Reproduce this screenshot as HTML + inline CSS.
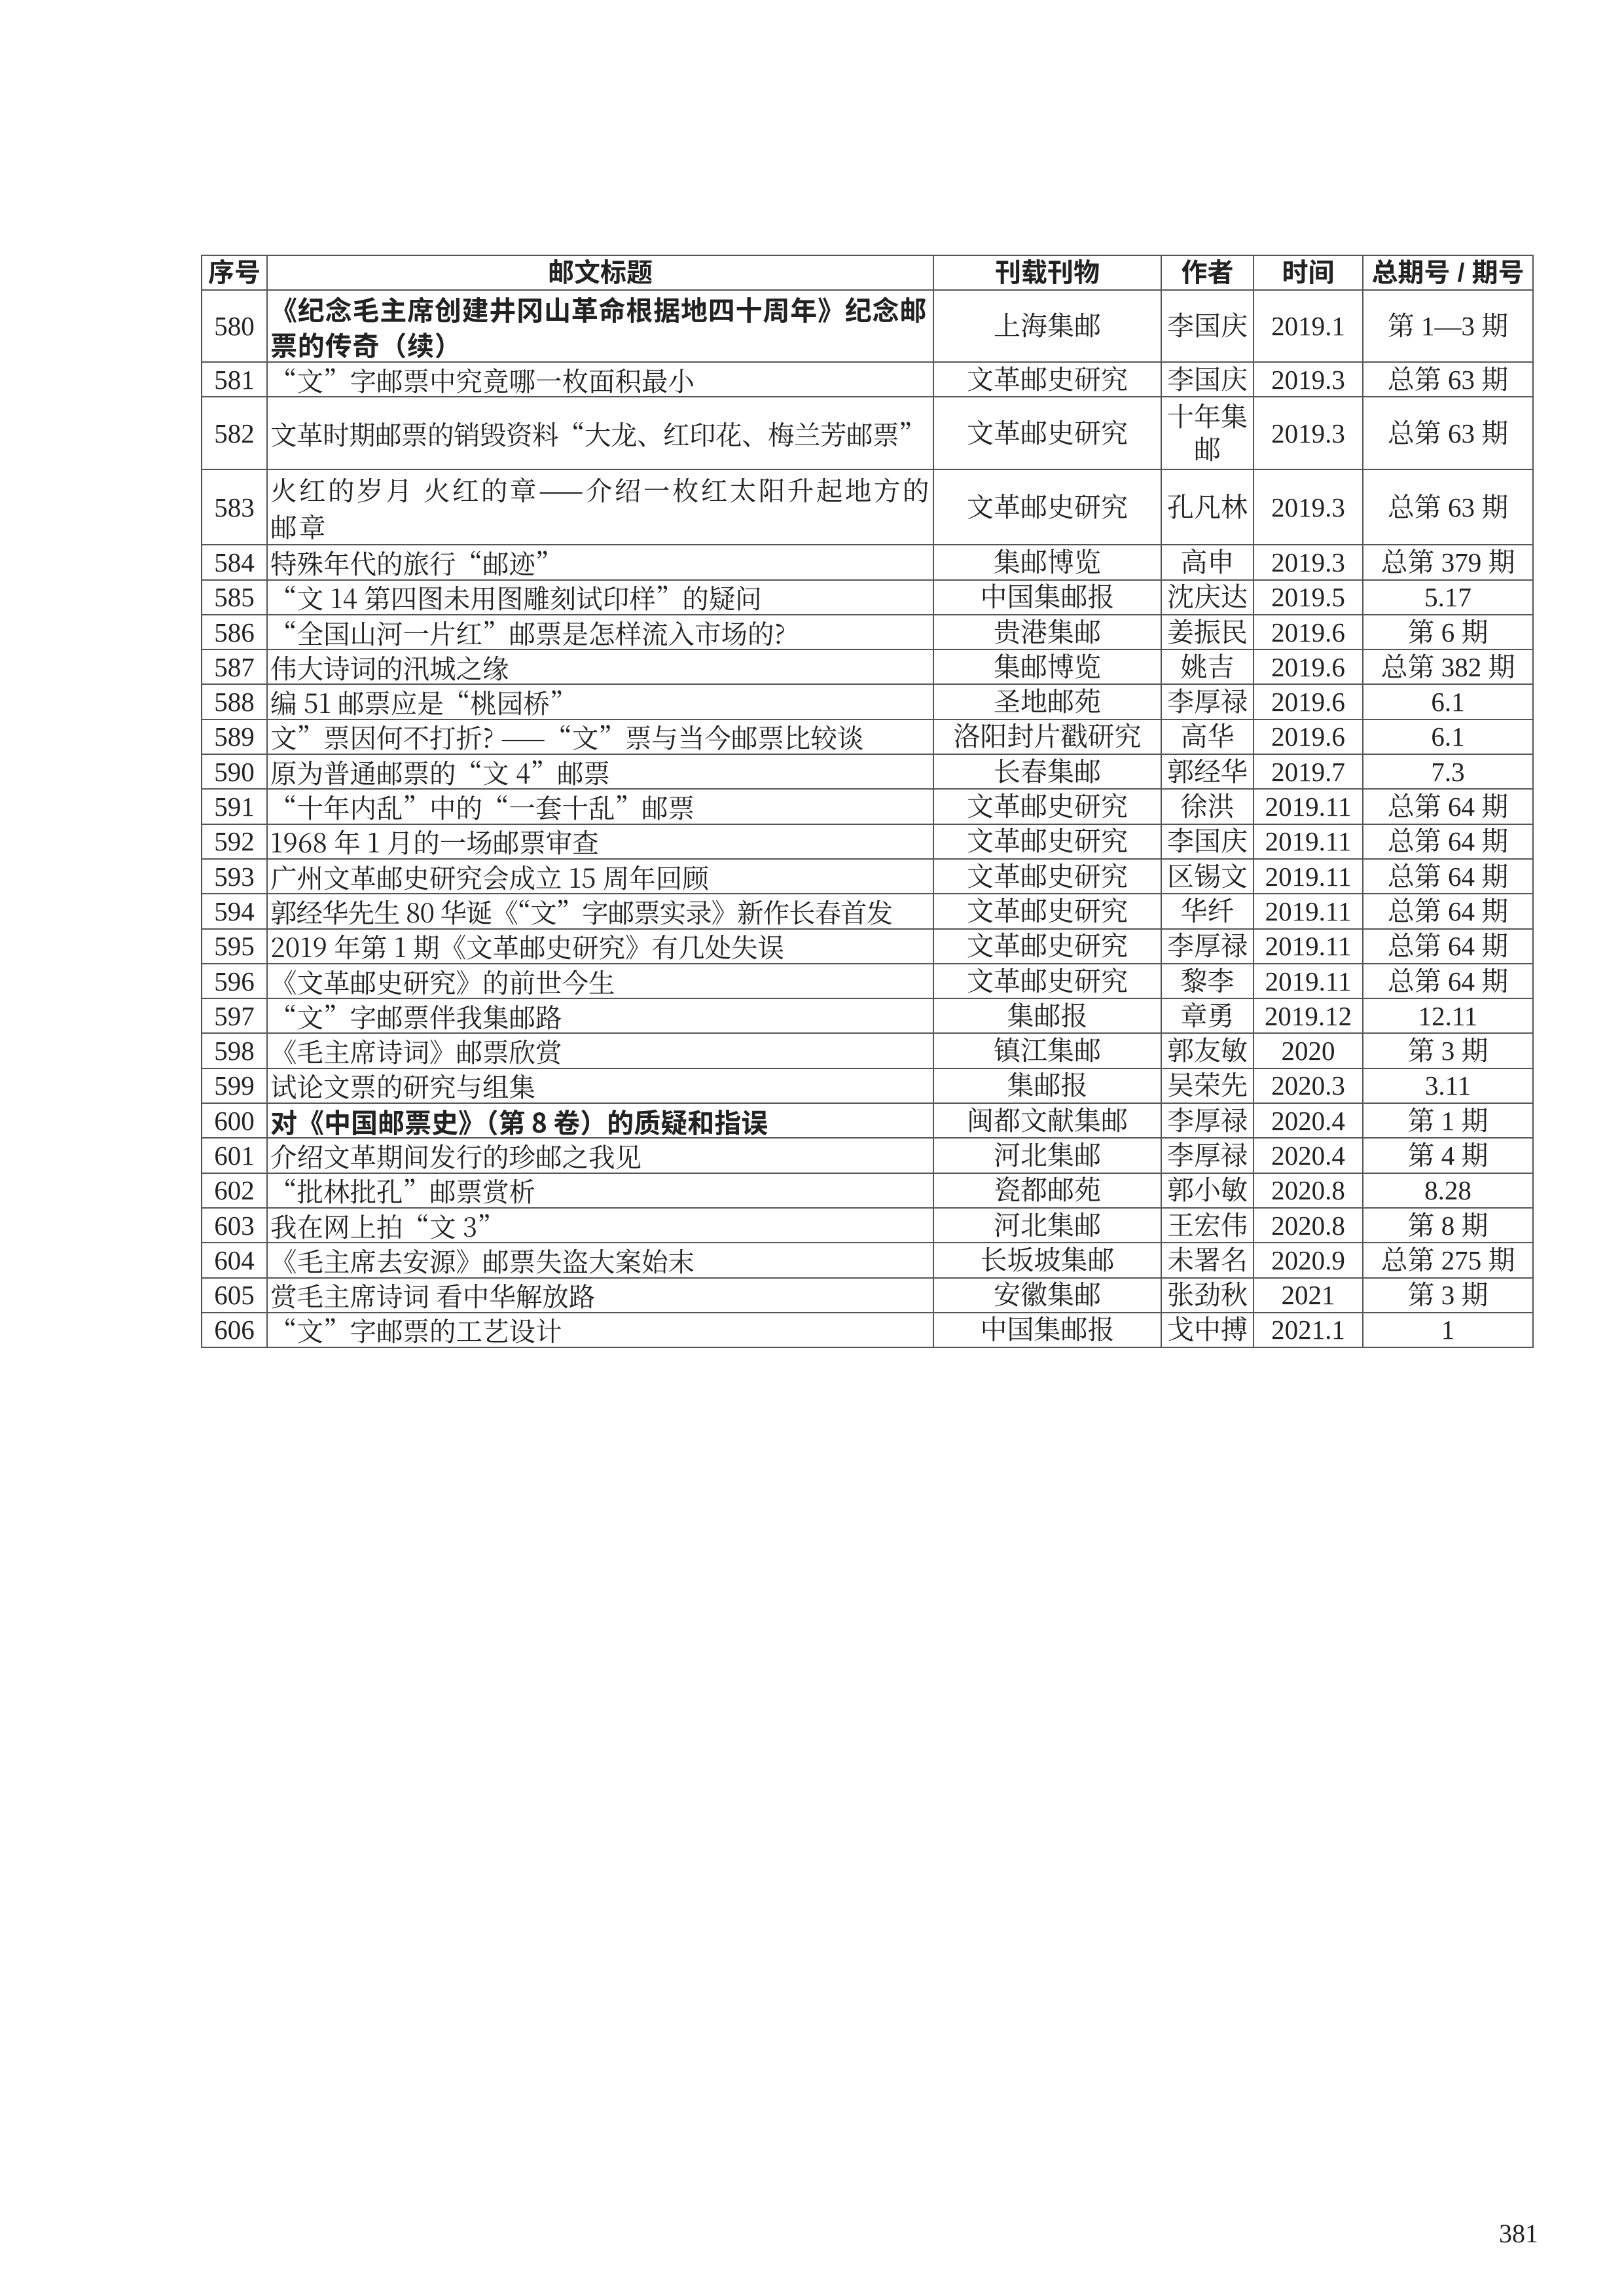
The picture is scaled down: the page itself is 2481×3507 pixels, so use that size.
<!DOCTYPE html>
<html><head><meta charset="utf-8"><style>
html,body{margin:0;padding:0;background:#fff;}
body{width:2481px;height:3507px;position:relative;overflow:hidden;}
table{position:absolute;left:307px;top:389px;border-collapse:collapse;table-layout:fixed;width:2034px;
font-family:"Liberation Serif","Noto Serif CJK SC",serif;font-size:41px;color:#222;}
td,th{border:2.5px solid #555;padding:0;line-height:48px;white-space:nowrap;overflow:hidden;vertical-align:middle;}
th{font-family:"Liberation Sans","Noto Sans CJK SC",sans-serif;font-weight:bold;font-size:40px;height:51px;}
td{text-align:center;height:51.3px;}
td.t{text-align:left;padding-left:4px;font-family:"Noto Serif CJK SC","Liberation Serif",serif;font-size:40.5px;}
td.n{text-align:center;}
td.b{font-family:"Noto Sans CJK SC","Liberation Sans",sans-serif;font-weight:bold;font-size:41px;}
.pg{position:absolute;left:2290px;top:3388px;font-family:"Liberation Serif",serif;font-size:40px;color:#222;}
</style></head><body>
<table>
<colgroup><col style="width:100px"><col style="width:1018px"><col style="width:348px"><col style="width:141px"><col style="width:167px"><col style="width:260px"></colgroup>
<tr><th>序号</th><th>邮文标题</th><th>刊载刊物</th><th>作者</th><th>时间</th><th>总期号 / 期号</th></tr>
<tr><td class="n" style="height:107px">580</td><td class="t b" style="line-height:54px;letter-spacing:0.8px">《纪念毛主席创建井冈山革命根据地四十周年》纪念邮<br>票的传奇（续）</td><td>上海集邮</td><td>李国庆</td><td>2019.1</td><td>第 1—3 期</td></tr>
<tr><td class="n">581</td><td class="t">“文”字邮票中究竟哪一枚面积最小</td><td>文革邮史研究</td><td>李国庆</td><td>2019.3</td><td>总第 63 期</td></tr>
<tr><td class="n" style="height:109px">582</td><td class="t" style="letter-spacing:-0.5px">文革时期邮票的销毁资料“大龙、红印花、梅兰芳邮票”</td><td>文革邮史研究</td><td style="line-height:50px">十年集<br>邮</td><td>2019.3</td><td>总第 63 期</td></tr>
<tr><td class="n" style="height:113px">583</td><td class="t" style="line-height:56px;letter-spacing:3.5px">火红的岁月 火红的章——介绍一枚红太阳升起地方的<br>邮章</td><td>文革邮史研究</td><td>孔凡林</td><td>2019.3</td><td>总第 63 期</td></tr>
<tr><td class="n">584</td><td class="t">特殊年代的旅行“邮迹”</td><td>集邮博览</td><td>高申</td><td>2019.3</td><td>总第 379 期</td></tr>
<tr><td class="n">585</td><td class="t">“文 14 第四图未用图雕刻试印样”的疑问</td><td>中国集邮报</td><td>沈庆达</td><td>2019.5</td><td>5.17</td></tr>
<tr><td class="n">586</td><td class="t">“全国山河一片红”邮票是怎样流入市场的?</td><td>贵港集邮</td><td>姜振民</td><td>2019.6</td><td>第 6 期</td></tr>
<tr><td class="n">587</td><td class="t">伟大诗词的汛城之缘</td><td>集邮博览</td><td>姚吉</td><td>2019.6</td><td>总第 382 期</td></tr>
<tr><td class="n">588</td><td class="t">编 51 邮票应是“桃园桥”</td><td>圣地邮苑</td><td>李厚禄</td><td>2019.6</td><td>6.1</td></tr>
<tr><td class="n">589</td><td class="t">文”票因何不打折? ——“文”票与当今邮票比较谈</td><td>洛阳封片戳研究</td><td>高华</td><td>2019.6</td><td>6.1</td></tr>
<tr><td class="n">590</td><td class="t">原为普通邮票的“文 4”邮票</td><td>长春集邮</td><td>郭经华</td><td>2019.7</td><td>7.3</td></tr>
<tr><td class="n">591</td><td class="t">“十年内乱”中的“一套十乱”邮票</td><td>文革邮史研究</td><td>徐洪</td><td>2019.11</td><td>总第 64 期</td></tr>
<tr><td class="n">592</td><td class="t">1968 年 1 月的一场邮票审查</td><td>文革邮史研究</td><td>李国庆</td><td>2019.11</td><td>总第 64 期</td></tr>
<tr><td class="n">593</td><td class="t">广州文革邮史研究会成立 15 周年回顾</td><td>文革邮史研究</td><td>区锡文</td><td>2019.11</td><td>总第 64 期</td></tr>
<tr><td class="n">594</td><td class="t" style="letter-spacing:-1px">郭经华先生 80 华诞《“文”字邮票实录》新作长春首发</td><td>文革邮史研究</td><td>华纤</td><td>2019.11</td><td>总第 64 期</td></tr>
<tr><td class="n">595</td><td class="t">2019 年第 1 期《文革邮史研究》有几处失误</td><td>文革邮史研究</td><td>李厚禄</td><td>2019.11</td><td>总第 64 期</td></tr>
<tr><td class="n">596</td><td class="t">《文革邮史研究》的前世今生</td><td>文革邮史研究</td><td>黎李</td><td>2019.11</td><td>总第 64 期</td></tr>
<tr><td class="n">597</td><td class="t">“文”字邮票伴我集邮路</td><td>集邮报</td><td>章勇</td><td>2019.12</td><td>12.11</td></tr>
<tr><td class="n">598</td><td class="t">《毛主席诗词》邮票欣赏</td><td>镇江集邮</td><td>郭友敏</td><td>2020</td><td>第 3 期</td></tr>
<tr><td class="n">599</td><td class="t">试论文票的研究与组集</td><td>集邮报</td><td>吴荣先</td><td>2020.3</td><td>3.11</td></tr>
<tr><td class="n">600</td><td class="t b">对《中国邮票史》（第 8 卷）的质疑和指误</td><td>闽都文献集邮</td><td>李厚禄</td><td>2020.4</td><td>第 1 期</td></tr>
<tr><td class="n">601</td><td class="t">介绍文革期间发行的珍邮之我见</td><td>河北集邮</td><td>李厚禄</td><td>2020.4</td><td>第 4 期</td></tr>
<tr><td class="n">602</td><td class="t">“批林批孔”邮票赏析</td><td>瓷都邮苑</td><td>郭小敏</td><td>2020.8</td><td>8.28</td></tr>
<tr><td class="n">603</td><td class="t">我在网上拍“文 3”</td><td>河北集邮</td><td>王宏伟</td><td>2020.8</td><td>第 8 期</td></tr>
<tr><td class="n">604</td><td class="t">《毛主席去安源》邮票失盗大案始末</td><td>长坂坡集邮</td><td>未署名</td><td>2020.9</td><td>总第 275 期</td></tr>
<tr><td class="n">605</td><td class="t">赏毛主席诗词 看中华解放路</td><td>安徽集邮</td><td>张劲秋</td><td>2021</td><td>第 3 期</td></tr>
<tr><td class="n">606</td><td class="t">“文”字邮票的工艺设计</td><td>中国集邮报</td><td>戈中搏</td><td>2021.1</td><td>1</td></tr>
</table>
<div class="pg">381</div>
</body></html>
